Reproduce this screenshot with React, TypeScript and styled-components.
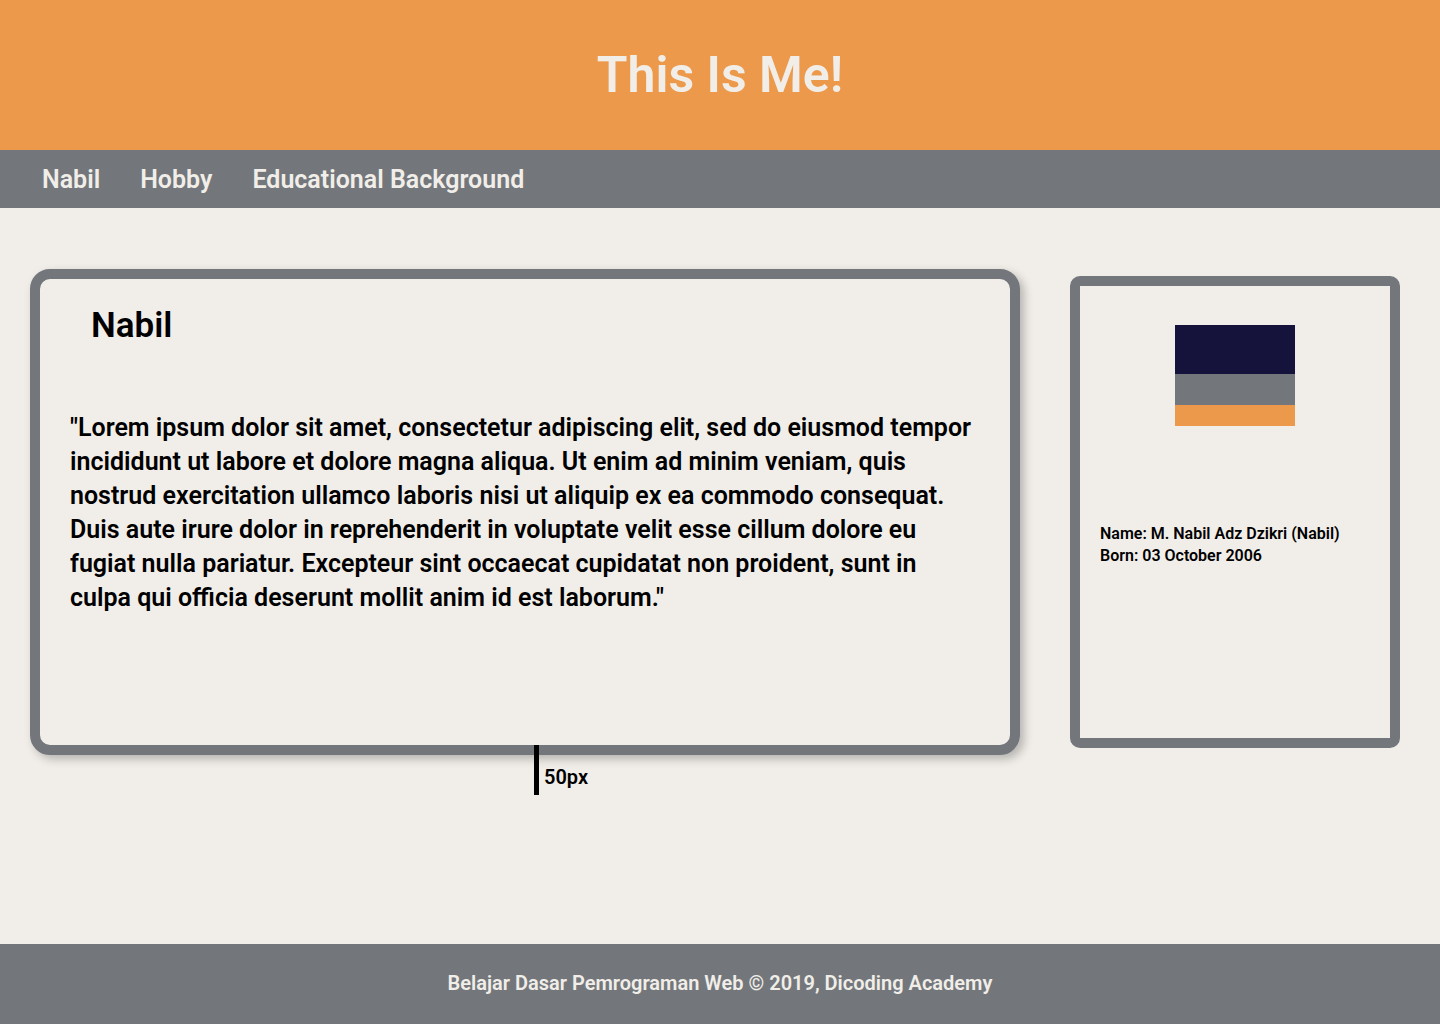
import React from 'react';
import styled, { createGlobalStyle } from 'styled-components';

const Global = createGlobalStyle`
  * { box-sizing: border-box; }
  body {
    margin: 0;
    background: #f1eee9;
    color: #000;
    font-family: Roboto, "Liberation Sans", sans-serif;
    font-weight: 600;
  }
  h1, h2, p, ul, figure { margin: 0; padding: 0; }
`;

const Page = styled.div`
  min-height: 100vh;
  display: flex;
  flex-direction: column;
`;

const Header = styled.header`
  padding: 44px 20px;
  background: #ec994b;
  color: #f1eee9;
  text-align: center;
`;

const Title = styled.h1`
  font-size: 50px;
  line-height: 62px;
  font-weight: 600;
`;

const Nav = styled.nav`
  padding: 13px 42px 11px;
  background: #73777b;
`;

const NavList = styled.ul`
  display: flex;
  gap: 40px;
  list-style: none;
`;

const NavLink = styled.a`
  display: block;
  color: #f1eee9;
  font-size: 25px;
  line-height: 34px;
  text-decoration: none;
`;

const Main = styled.main`
  flex: 1;
  display: flex;
  align-items: flex-start;
  gap: 50px;
  padding: 61px 40px 61px 30px;
`;

const Content = styled.div`
  flex: 1;
  min-width: 0;
`;

const Article = styled.article`
  min-height: 486px;
  padding: 27px 20px;
  border: 10px solid #73777b;
  border-radius: 20px;
  box-shadow: 4px 4px 10px rgba(0, 0, 0, 0.25);
`;

const ArticleTitle = styled.h2`
  padding: 0 31px;
  margin-bottom: 65px;
  font-size: 35px;
  line-height: 40px;
  font-weight: 600;
`;

const Paragraph = styled.p`
  padding: 0 10px;
  font-size: 25px;
  line-height: 34px;
`;

const Spacing = styled.div`
  display: flex;
  align-items: flex-end;
  gap: 5px;
  margin-top: -10px;
  padding-left: calc(50% + 9px);
  font-size: 20px;
  line-height: 36px;
`;

const Marker = styled.span`
  width: 5px;
  height: 50px;
  background: #000;
`;

const Aside = styled.aside`
  flex: 0 0 330px;
  min-height: 472px;
  margin-top: 7px;
  padding: 39px 20px;
  border: 10px solid #73777b;
  border-radius: 10px;
`;

const Flag = styled.figure`
  display: grid;
  grid-template-rows: 49px 31px 21px;
  width: 120px;
  margin: 0 auto 97px;
`;

const Stripe = styled.span<{ $color: string }>`
  background: ${({ $color }) => $color};
`;

const Detail = styled.p`
  font-size: 16px;
  line-height: 22px;
`;

const Footer = styled.footer`
  padding: 23px 20px 25px;
  background: #73777b;
  color: #f1eee9;
  font-size: 20px;
  line-height: 32px;
  text-align: center;
`;

const links = ['Nabil', 'Hobby', 'Educational Background'];
const stripes = ['#15133c', '#73777b', '#ec994b'];

export default function App() {
  return (
    <Page>
      <Global />
      <Header><Title>This Is Me!</Title></Header>
      <Nav>
        <NavList>
          {links.map((l) => <li key={l}><NavLink href="#nabil">{l}</NavLink></li>)}
        </NavList>
      </Nav>
      <Main>
        <Content>
          <Article id="nabil">
            <ArticleTitle>Nabil</ArticleTitle>
            <Paragraph>
              "Lorem ipsum dolor sit amet, consectetur adipiscing elit, sed do eiusmod tempor incididunt ut labore et dolore magna aliqua. Ut enim ad minim veniam, quis nostrud exercitation ullamco laboris nisi ut aliquip ex ea commodo consequat. Duis aute irure dolor in reprehenderit in voluptate velit esse cillum dolore eu fugiat nulla pariatur. Excepteur sint occaecat cupidatat non proident, sunt in culpa qui officia deserunt mollit anim id est laborum."
            </Paragraph>
          </Article>
          <Spacing><Marker />50px</Spacing>
        </Content>
        <Aside>
          <Flag>{stripes.map((c) => <Stripe key={c} $color={c} />)}</Flag>
          <Detail>Name: M. Nabil Adz Dzikri (Nabil)</Detail>
          <Detail>Born: 03 October 2006</Detail>
        </Aside>
      </Main>
      <Footer>Belajar Dasar Pemrograman Web © 2019, Dicoding Academy</Footer>
    </Page>
  );
}
